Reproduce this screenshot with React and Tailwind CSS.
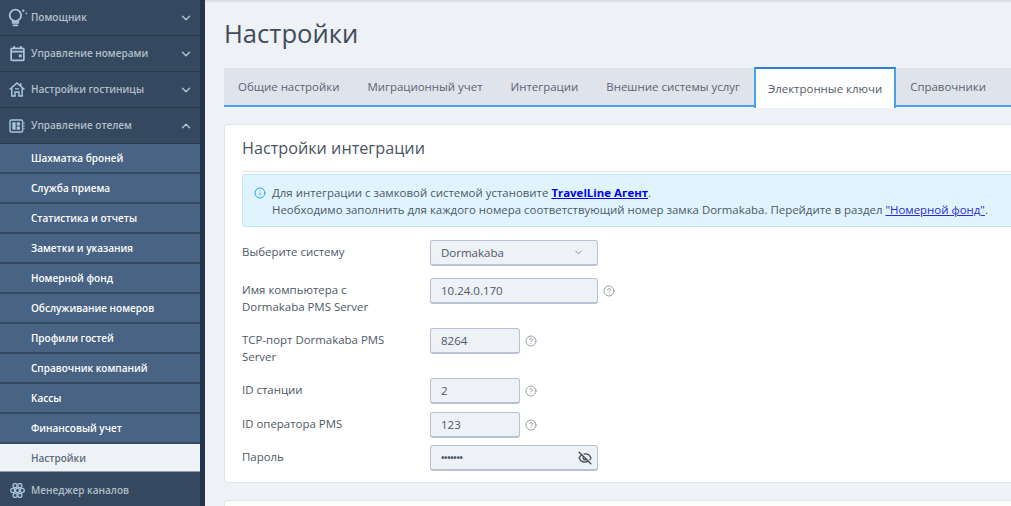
import React from "react";
import { ChevronDown, ChevronUp, EyeOff, CircleHelp, Info } from "lucide-react";

const Bulb = () => (
  <svg width="21" height="21" viewBox="0 0 20 20" fill="none" stroke="#a9c6dd" strokeWidth="1.7">
    <circle cx="8" cy="8" r="5.4" />
    <path d="M5.5 13.5v1.5h5v-1.5M6.2 17.5h3.6" strokeLinecap="round" />
    <circle cx="15.5" cy="3.5" r="1.1" fill="#a9c6dd" stroke="none" />
    <circle cx="18.5" cy="6" r=".8" fill="#a9c6dd" stroke="none" />
  </svg>
);
const Cal = () => (
  <svg width="15" height="17" viewBox="0 0 16 17" fill="none" stroke="#a9c6dd" strokeWidth="1.8">
    <rect x="1.2" y="3" width="13.6" height="12.8" rx="1" />
    <path d="M1.2 6.5h13.6M4.5 .5v3M11.5 .5v3" />
    <rect x="9.5" y="9.5" width="3" height="3" fill="#a9c6dd" stroke="none" />
  </svg>
);
const House = () => (
  <svg width="16" height="15" viewBox="0 0 16 15" fill="none" stroke="#a9c6dd" strokeWidth="1.5">
    <path d="M.6 7.5 8 1l7.4 6.5M2.8 6V14h3.2v-4h4v4h3.2V6" />
    <path d="M11.8 1.2v3" />
    <path d="M6 6.8h4" strokeWidth="1.2" />
  </svg>
);
const Board = () => (
  <svg width="16" height="14" viewBox="0 0 17 15" fill="none" stroke="#a9c6dd" strokeWidth="1.5">
    <rect x="1" y="1" width="13.5" height="13" rx="1.5" />
    <rect x="3.5" y="3.5" width="3.5" height="8" fill="#a9c6dd" stroke="none" />
    <rect x="8.2" y="3.5" width="3.5" height="3.5" fill="#a9c6dd" stroke="none" />
    <rect x="8.2" y="8" width="3.5" height="3.5" fill="#a9c6dd" stroke="none" />
    <path d="M16 4v1M16 7v1M16 10v1" />
  </svg>
);
const Nodes = () => (
  <svg width="15" height="15" viewBox="0 0 16 16" fill="none" stroke="#a9c6dd" strokeWidth="1.4">
    {[[5.5,2.8],[10.5,2.8],[3,8],[8,8],[13,8],[5.5,13.2],[10.5,13.2]].map(([x,y],i)=>(
      <circle key={i} cx={x} cy={y} r="2.2" />
    ))}
  </svg>
);

const Head = ({ icon, label, open, last }) => (
  <div className={`flex h-9 shrink-0 items-center bg-[#34495f] ${last ? "" : "border-b border-[#2a3b50]"}`}>
    <span className="flex w-[31px] shrink-0 justify-center pl-[3px]">{icon}</span>
    <span className="flex-1 text-[10px] font-semibold text-[#b3bfcb]">{label}</span>
    {!last && (open
      ? <ChevronUp size={14} strokeWidth={2.4} className="mr-[7px] text-[#b9c5d0]" />
      : <ChevronDown size={14} strokeWidth={2.4} className="mr-[7px] text-[#b9c5d0]" />)}
  </div>
);

const subs = ["Шахматка броней","Служба приема","Статистика и отчеты","Заметки и указания","Номерной фонд","Обслуживание номеров","Профили гостей","Справочник компаний","Кассы","Финансовый учет"];

const Sidebar = () => (
  <aside className="flex h-[506px] w-[205px] shrink-0 flex-col overflow-hidden border-r-[5px] border-[#25364a] bg-[#34495f]">
    <Head icon={<Bulb />} label="Помощник" />
    <Head icon={<Cal />} label="Управление номерами" />
    <Head icon={<House />} label="Настройки гостиницы" />
    <Head icon={<Board />} label="Управление отелем" open />
    {subs.map((s) => (
      <div key={s} className="flex h-[30px] shrink-0 items-center border-b-2 border-[#34495f] bg-[#486383] pl-[31px] text-[10px] font-semibold text-white">{s}</div>
    ))}
    <div className="flex h-[28px] shrink-0 items-center border-b border-[#8e9aa8] bg-[#eef1f5] pl-[31px] pt-[1px] text-[10px] font-semibold text-[#5c6c80]">Настройки</div>
    <Head icon={<Nodes />} label="Менеджер каналов" last />
  </aside>
);

const tabs = ["Общие настройки","Миграционный учет","Интеграции","Внешние системы услуг","Электронные ключи","Справочники"];

const Tabs = () => (
  <div className="mt-[17px] flex h-[39px] w-[800px] border-b-2 border-[#4aa3e8] bg-[#dfe3ec]">
    {tabs.map((t) => {
      const active = t === "Электронные ключи";
      return (
        <div key={t} className={active
          ? "-mb-[2px] -mt-[1px] flex h-[41px] items-center whitespace-nowrap border-x-2 border-t-2 border-x-[#4aa3e8] border-t-[#2f80d0] bg-white px-[12px] text-[11.45px] text-[#50596a]"
          : "flex items-center whitespace-nowrap px-[14px] text-[11.45px] text-[#5a6474]"}>{t}</div>
      );
    })}
  </div>
);

const Help = () => <CircleHelp size={12} strokeWidth={1.6} className="ml-[5px] mt-[7px] shrink-0 text-[#7e8a96]" />;

const box = "flex h-[26px] items-center rounded-[3px] border border-[#b7c3d2] border-b-2 bg-[#eef1f5] px-[10px] text-[11.5px] text-[#4d5866]";

const Row = ({ label, children, mb, help }) => (
  <div className={`flex ${mb}`}>
    <div className="w-[188px] shrink-0 pr-[30px] pt-[3px] text-[11.45px] leading-[17px] text-[#4d5866]">{label}</div>
    {children}
    {help && <Help />}
  </div>
);

const Form = () => (
  <div className="pt-[13px]">
    <Row label="Выберите систему" mb="mb-[12px]">
      <div className={`${box} w-[168px] justify-between`}>
        <span>Dormakaba</span>
        <ChevronDown size={11} className="mr-[3px] text-[#7e8a96]" />
      </div>
    </Row>
    <Row label={<>Имя компьютера с<br />Dormakaba PMS Server</>} mb="mb-[13px]" help>
      <div className={`${box} w-[168px]`}>10.24.0.170</div>
    </Row>
    <Row label="TCP-порт Dormakaba PMS Server" mb="mb-[13px]" help>
      <div className={`${box} w-[90px]`}>8264</div>
    </Row>
    <Row label="ID станции" mb="mb-[8px]" help>
      <div className={`${box} w-[90px]`}>2</div>
    </Row>
    <Row label="ID оператора PMS" mb="mb-[7px]" help>
      <div className={`${box} w-[90px]`}>123</div>
    </Row>
    <Row label="Пароль">
      <div className={`${box} w-[168px] justify-between pr-[5px]`}>
        <span className="text-[9px] font-bold tracking-[-0.3px]">•••••••</span>
        <EyeOff size={14} strokeWidth={2.4} className="text-[#46505c]" />
      </div>
    </Row>
  </div>
);

export default function App() {
  return (
    <div className="flex h-[506px] w-[1011px] overflow-hidden bg-[#eef1f5] font-['Open_Sans','Noto_Sans',sans-serif]">
      <Sidebar />
      <main className="min-w-0 flex-1 overflow-hidden">
        <div className="h-[3px] bg-gradient-to-b from-[#d5d8dc] to-[#eef1f5]" />
        <div className="pl-[19px]">
          <h1 className="pt-[14px] text-[25.6px] leading-[34px] font-normal text-[#414b5a]">Настройки</h1>
          <Tabs />
          <section className="mt-[17px] h-[359px] w-[830px] rounded-[3px] border border-[#dfe3ea] bg-white pl-[17px]">
            <h2 className="border-b border-[#dde3ec] pb-[11px] pt-[12px] text-[16.2px] leading-[23px] font-normal text-[#4a5464]">Настройки интеграции</h2>
            <div className="mt-[2px] flex h-[53px] rounded-[3px] border border-[#bfe6fb] bg-[#e0f4fe] pl-[11px] pt-[9px] text-[11.45px] leading-[17px] text-[#4d5866]">
              <Info size={12} strokeWidth={2} className="mr-[6px] mt-[3px] shrink-0 text-[#2f9fe0]" />
              <p className="whitespace-nowrap">
                Для интеграции с замковой системой установите <a className="font-bold text-[#0000ee] underline">TravelLine Агент</a>.<br />
                Необходимо заполнить для каждого номера соответствующий номер замка Dormakaba. Перейдите в раздел <a className="text-[#2b2bdd] underline">"Номерной фонд"</a>.
              </p>
            </div>
            <Form />
          </section>
          <section className="mt-[17px] h-[40px] w-[830px] rounded-[3px] border border-[#dfe3ea] bg-white" />
        </div>
      </main>
    </div>
  );
}
